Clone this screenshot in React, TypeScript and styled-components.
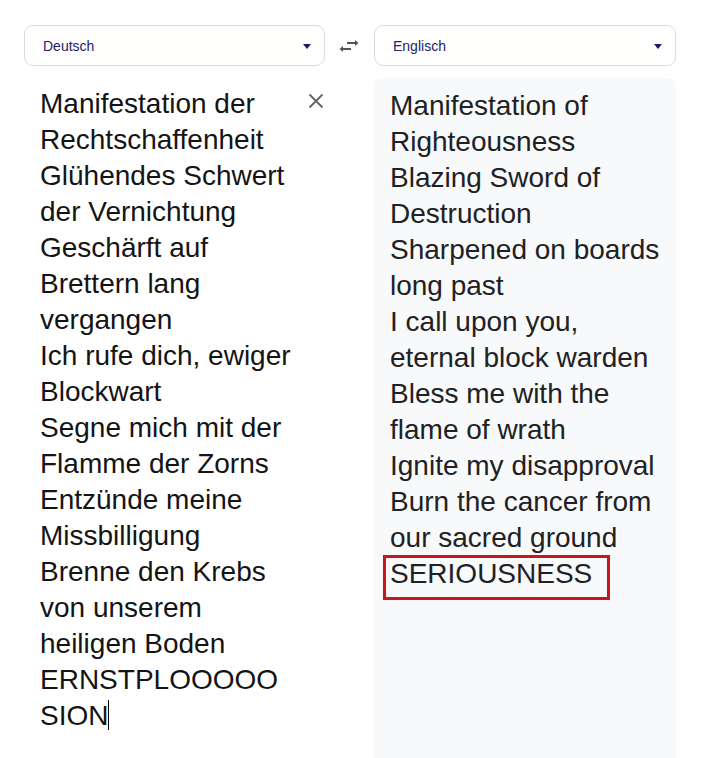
import React from "react";
import styled, { createGlobalStyle } from "styled-components";

const GlobalStyle = createGlobalStyle`
  html, body {
    margin: 0;
    padding: 0;
    background: #ffffff;
    overflow: hidden;
    font-family: "Liberation Sans", Arial, sans-serif;
  }
`;

const Page = styled.div`
  display: grid;
  grid-template-columns: 301px 49px 302px;
  grid-template-rows: 41px auto;
  row-gap: 12px;
  padding: 25px 0 0 24px;
`;

const Select = styled.div`
  display: flex;
  align-items: center;
  justify-content: space-between;
  box-sizing: border-box;
  height: 41px;
  padding: 0 13px 0 18px;
  border: 1px solid #dadce0;
  border-radius: 9px;
  background: #fffffe;
  font-size: 14px;
  color: #24216b;
  cursor: pointer;
`;

const Caret = styled.span`
  width: 0;
  height: 0;
  border-left: 4.5px solid transparent;
  border-right: 4.5px solid transparent;
  border-top: 5px solid #1d1a5e;
  margin-top: 2px;
`;

const SwapButton = styled.div`
  display: flex;
  align-items: center;
  justify-content: center;
  padding-right: 2px;
  color: #555555;
`;

const SourcePane = styled.div`
  display: flex;
  align-items: flex-start;
  padding: 8px 0 0 16px;
`;

const SourceText = styled.div`
  width: 253px;
  font-size: 28px;
  line-height: 36px;
  color: #141414;
  white-space: pre-wrap;
  overflow-wrap: break-word;
`;

const TextCursor = styled.span`
  display: inline-block;
  width: 1px;
  height: 30px;
  background: #000;
  vertical-align: -5px;
`;

const CloseButton = styled.div`
  margin: 7px 0 0 15px;
  width: 16px;
  height: 16px;
  display: flex;
  color: #5f6368;
`;

const TargetPane = styled.div`
  grid-column: 3;
  box-sizing: border-box;
  min-height: 680px;
  padding: 10px 12px 0 16px;
  background: #f8f9fa;
  border-radius: 8px 8px 0 0;
`;

const TargetText = styled.div`
  font-size: 28px;
  line-height: 36px;
  color: #202124;
  white-space: pre-wrap;
  overflow-wrap: break-word;
`;

const Highlight = styled.span`
  position: relative;
  display: inline-block;
  &::after {
    content: "";
    position: absolute;
    left: -7px;
    right: -18px;
    top: -1px;
    bottom: -8px;
    border: 3px solid #c8161d;
  }
`;

const sourceText = `Manifestation der Rechtschaffenheit
Glühendes Schwert der Vernichtung
Geschärft auf Brettern lang vergangen
Ich rufe dich, ewiger Blockwart
Segne mich mit der Flamme der Zorns
Entzünde meine Missbilligung
Brenne den Krebs von unserem heiligen Boden
ERNSTPLOOOOOSION`;

const targetText = `Manifestation of Righteousness
Blazing Sword of Destruction
Sharpened on boards long past
I call upon you, eternal block warden
Bless me with the flame of wrath
Ignite my disapproval
Burn the cancer from our sacred ground
`;

const SwapIcon = () => (
  <svg width="20" height="14" viewBox="0 0 20 14" fill="none">
    <line x1="8" y1="4" x2="16.5" y2="4" stroke="currentColor" strokeWidth="2" />
    <polygon points="16,1 19.5,4 16,7" fill="currentColor" />
    <line x1="3.5" y1="10" x2="12" y2="10" stroke="currentColor" strokeWidth="2" />
    <polygon points="4,7 0.5,10 4,13" fill="currentColor" />
  </svg>
);

const CloseIcon = () => (
  <svg width="16" height="16" viewBox="0 0 16 16" fill="none">
    <path d="M1.5 1.5 L14.5 14.5 M14.5 1.5 L1.5 14.5" stroke="currentColor" strokeWidth="1.8" />
  </svg>
);

export default function App() {
  return (
    <>
      <GlobalStyle />
      <Page>
        <Select>
          <span>Deutsch</span>
          <Caret />
        </Select>
        <SwapButton>
          <SwapIcon />
        </SwapButton>
        <Select>
          <span>Englisch</span>
          <Caret />
        </Select>

        <SourcePane>
          <SourceText>
            {sourceText}
            <TextCursor />
          </SourceText>
          <CloseButton>
            <CloseIcon />
          </CloseButton>
        </SourcePane>
        <TargetPane>
          <TargetText>
            {targetText}
            <Highlight>SERIOUSNESS</Highlight>
          </TargetText>
        </TargetPane>
      </Page>
    </>
  );
}
